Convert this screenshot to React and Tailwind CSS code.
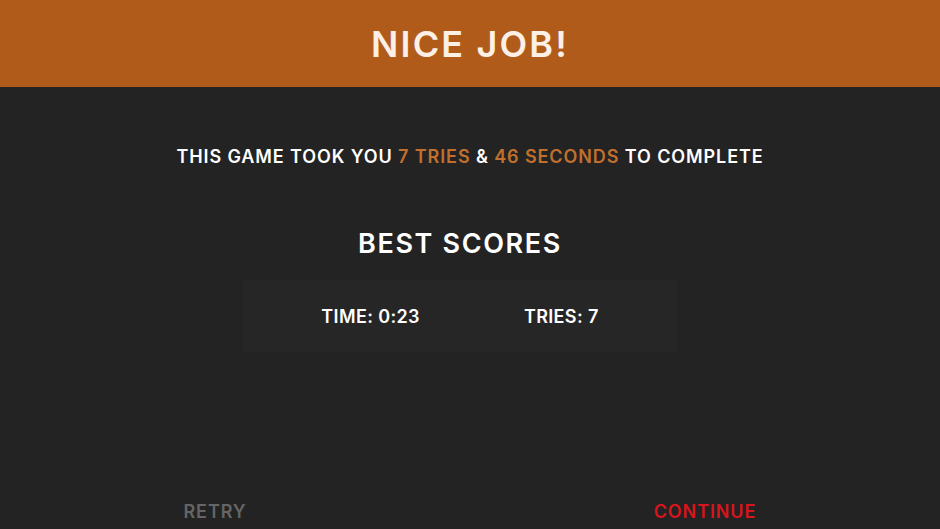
import React from "react"

const App = () => {
  return (
    <div
      className="w-[940px] h-[529px] bg-[#232323] overflow-hidden"
      style={{ fontFamily: "Inter, 'Open Sans', sans-serif" }}
    >
      {/* Header */}
      <div className="h-[87px] bg-[#b05b1a] flex items-center justify-center">
        <h1 className="text-[36px] font-semibold text-[#fcefe6] tracking-[0.06em]">NICE JOB!</h1>
      </div>

      {/* Summary */}
      <p className="mt-[57px] leading-[26px] text-center text-[18px] font-semibold text-white tracking-[0.05em]">
        THIS GAME TOOK YOU <span className="text-[#c0702c]">7 TRIES</span> &amp;{" "}
        <span className="text-[#c0702c]">46 SECONDS</span> TO COMPLETE
      </p>

      <div className="w-[920px] flex flex-col items-center">
        <h2 className="mt-[56px] leading-[36px] text-[27px] font-semibold text-white tracking-[0.06em]">BEST SCORES</h2>

        {/* Best scores panel */}
        <div className="mt-[18px] w-[436px] h-[72px] bg-[#262626] flex items-center justify-center gap-[104px]">
          <span className="text-[18px] font-semibold text-white tracking-[0.02em]">TIME: 0:23</span>
          <span className="text-[18px] font-semibold text-white tracking-[0.02em]">TRIES: 7</span>
        </div>

        {/* Actions */}
        <div className="mt-[147px] w-[640px] flex justify-between">
          <button className="w-[150px] leading-[26px] text-center text-[18px] font-semibold text-[#656565] tracking-[0.05em]">RETRY</button>
          <button className="w-[150px] leading-[26px] text-center text-[18px] font-semibold text-[#d8151c] tracking-[0.05em]">CONTINUE</button>
        </div>
      </div>
    </div>
  )
}

export default App
